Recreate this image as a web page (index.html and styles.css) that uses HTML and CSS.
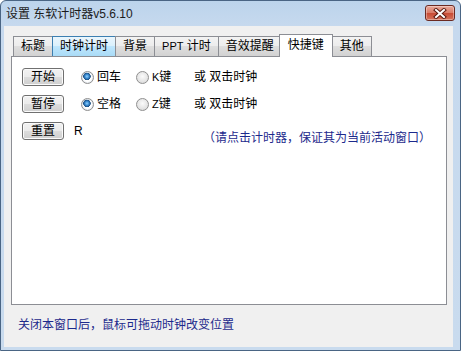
FILE: index.html
```html
<!DOCTYPE html>
<html lang="zh-CN">
<head>
  <meta charset="UTF-8">
  <title>设置 东软计时器v5.6.10</title>
  <link rel="stylesheet" href="styles.css">
</head>
<body>
  <div class="window">
    <!-- Title bar -->
    <div class="titlebar">
      <span class="title">设置 东软计时器v5.6.10</span>
      <button class="close-btn" title="关闭">
        <svg width="14" height="11" viewBox="0 0 14 11">
          <path d="M3 2 L11 9 M11 2 L3 9" stroke="#5a1a10" stroke-width="4" stroke-linecap="square"/>
          <path d="M3 2 L11 9 M11 2 L3 9" stroke="#fff" stroke-width="2" stroke-linecap="square"/>
        </svg>
      </button>
    </div>

    <div class="client">
      <!-- Tabs -->
      <ul class="tabs">
        <li class="tab">标题</li>
        <li class="tab hover">时钟计时</li>
        <li class="tab">背景</li>
        <li class="tab"><span class="latin">PPT</span> 计时</li>
        <li class="tab">音效提醒</li>
        <li class="tab active">快捷键</li>
        <li class="tab">其他</li>
      </ul>

      <!-- Shortcut panel -->
      <div class="panel">
        <div class="row">
          <button class="btn">开始</button>
          <label class="radio first"><span class="dot checked"></span>回车</label>
          <label class="radio second"><span class="dot"></span><span class="latin">K</span>键</label>
          <span class="note">或 双击时钟</span>
        </div>
        <div class="row">
          <button class="btn">暂停</button>
          <label class="radio first"><span class="dot checked"></span>空格</label>
          <label class="radio second"><span class="dot"></span><span class="latin">Z</span>键</label>
          <span class="note">或 双击时钟</span>
        </div>
        <div class="row">
          <button class="btn">重置</button>
          <span class="key latin">R</span>
          <span class="hint">（请点击计时器，保证其为当前活动窗口）</span>
        </div>
      </div>

      <p class="footer">关闭本窗口后，鼠标可拖动时钟改变位置</p>
    </div>
  </div>
</body>
</html>
```

FILE: styles.css
```css
/* Reset */
* {
  margin: 0;
  padding: 0;
  box-sizing: border-box;
}

body {
  font-family: "Liberation Sans", "Noto Sans CJK SC", sans-serif;
  font-size: 12px;
  color: #000;
  background: #fff;
}

/* Window frame */
.window {
  width: 461px;
  height: 351px;
  border: 1px solid #4a6584;
  border-radius: 6px 6px 0 0;
  background: linear-gradient(#bcd4ec, #c6d9ee 25px, #c9dbee);
  display: flex;
  flex-direction: column;
  padding: 0 7px 3px 3px;
}

.titlebar {
  height: 25px;
  display: flex;
  align-items: flex-start;
}

.title {
  margin: 5px 0 0 2px;
  line-height: 16px;
  color: #1b1b1b;
}

.close-btn {
  margin: 4px -2px 0 auto;
  width: 30px;
  height: 16px;
  border: 1px solid #6b2a22;
  border-radius: 3px;
  background: linear-gradient(#e9a99a, #d97a66 50%, #c74a33 50%, #d5735c);
  display: flex;
  align-items: center;
  justify-content: center;
  box-shadow: inset 0 0 0 1px rgba(255, 255, 255, 0.35);
}

/* Client area */
.client {
  flex: 1;
  background: #f0f0f0;
  display: flex;
  flex-direction: column;
  padding: 0 6px 0 7px;
}

/* Tabs */
.tabs {
  list-style: none;
  display: flex;
  align-items: flex-end;
  padding: 7px 0 0 2px;
  height: 30px;
}

.tab {
  height: 20px;
  padding: 0 7px;
  line-height: 18px;
  border: 1px solid #8c8e94;
  border-bottom: none;
  margin-right: -1px;
  background: linear-gradient(#f3f3f3, #ececec 50%, #dedede 50%, #d2d2d2);
  white-space: nowrap;
}

.tab.hover {
  background: linear-gradient(#eaf6fd, #d9f0fc 50%, #bee6fd 50%, #a9dbf6);
  border-color: #3c7fb1;
}

.tab.active {
  position: relative;
  z-index: 1;
  height: 23px;
  margin: 0 -1px -1px -2px;
  padding: 0 8px;
  line-height: 20px;
  background: #fff;
}

.latin {
  font-family: "Liberation Sans", sans-serif;
  font-size: 11px;
}

/* Panel */
.panel {
  height: 249px;
  background: #fff;
  border: 1px solid #8c8e94;
  padding: 11px 10px 0 10px;
  display: flex;
  flex-direction: column;
  gap: 9px;
}

.row {
  display: flex;
  align-items: flex-start;
  height: 18px;
}

.btn {
  width: 42px;
  height: 18px;
  font: inherit;
  line-height: 16px;
  border: 1px solid #707070;
  border-radius: 3px;
  background: linear-gradient(#f2f2f2, #ebebeb 50%, #dddddd 50%, #cfcfcf);
  box-shadow: inset 0 0 0 1px #fbfbfb;
  flex: none;
}

.radio {
  display: flex;
  align-items: center;
  height: 18px;
  line-height: 18px;
}

.radio.first {
  width: 55px;
  margin-left: 17px;
}

.radio.second {
  width: 58px;
}

.dot {
  width: 13px;
  height: 13px;
  border-radius: 50%;
  border: 1px solid #8f8f8f;
  background: radial-gradient(circle at 50% 40%, #fbfbfb, #e4e4e4 60%, #d0d0d0);
  margin-right: 3px;
  flex: none;
}

.dot.checked {
  background:
    radial-gradient(circle at 45% 40%, #8fd2ff 0, #3a8ad0 2px, #1b4f83 3.5px, transparent 4px),
    radial-gradient(circle, #fff 4px, #d6dde4 6px);
}

.note {
  line-height: 18px;
}

.key {
  margin-left: 10px;
  line-height: 18px;
  font-size: 12px;
}

.hint {
  margin: 8px 5px 0 auto;
  line-height: 16px;
  color: #1d2a8c;
}

/* Footer */
.footer {
  margin: 12px 0 0 7px;
  line-height: 16px;
  color: #1d2a8c;
}
```
